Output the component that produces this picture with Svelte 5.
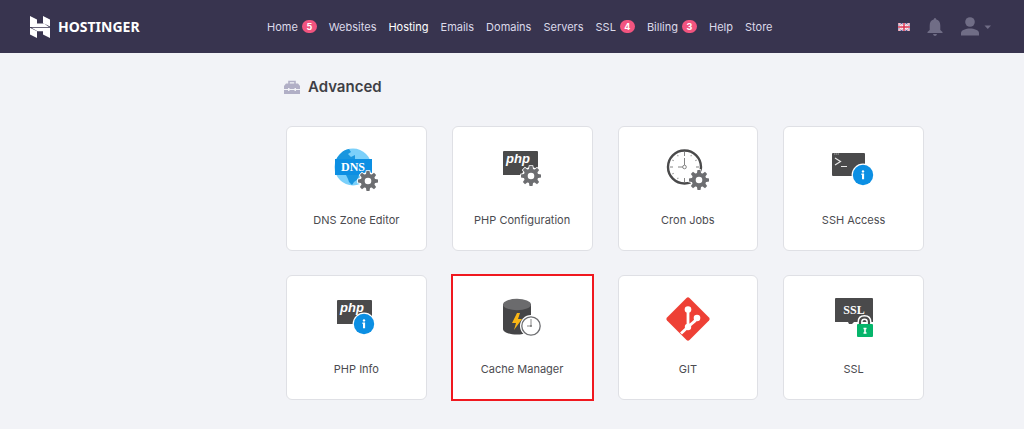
<script lang="ts">
	type NavItem = { label: string; count?: number };

	const nav: NavItem[] = [
		{ label: 'Home', count: 5 },
		{ label: 'Websites' },
		{ label: 'Hosting' },
		{ label: 'Emails' },
		{ label: 'Domains' },
		{ label: 'Servers' },
		{ label: 'SSL', count: 4 },
		{ label: 'Billing', count: 3 },
		{ label: 'Help' },
		{ label: 'Store' }
	];

	const tools = [
		{ id: 'dns', label: 'DNS Zone Editor' },
		{ id: 'php', label: 'PHP Configuration' },
		{ id: 'cron', label: 'Cron Jobs' },
		{ id: 'ssh', label: 'SSH Access' },
		{ id: 'phpinfo', label: 'PHP Info' },
		{ id: 'cache', label: 'Cache Manager' },
		{ id: 'git', label: 'GIT' },
		{ id: 'ssl', label: 'SSL' }
	];

	const activeNav = 'Hosting';
	let selected = $state('cache');

	const teeth = [0, 45, 90, 135, 180, 225, 270, 315];
	const ticks = [30, 60, 120, 150, 210, 240, 300, 330];
</script>

{#snippet gear(x: number, y: number)}
	<g transform="translate({x} {y})">
		<circle r="9" fill="#fff" />
		{#each teeth as angle}
			<path
				d="M-2.2-6 L-1.5-10 H1.5 L2.2-6Z"
				fill="#6d6e71"
				stroke="#fff"
				stroke-width="1.6"
				paint-order="stroke"
				transform="rotate({angle})"
			/>
		{/each}
		<circle r="5.3" fill="#fff" stroke="#6d6e71" stroke-width="4" />
	</g>
{/snippet}

{#snippet info(x: number, y: number)}
	<g transform="translate({x} {y})">
		<circle r="11.4" fill="#fff" />
		<circle r="10.2" fill="#0c8fe3" />
		<circle cy="-3.6" r="1.2" fill="#fff" />
		<path d="M-1.6-1.4H1.1V4.2H-1V0H-1.6Z" fill="#fff" />
	</g>
{/snippet}

{#snippet icon(id: string)}
	<svg class="icon" viewBox="0 0 44 44" aria-hidden="true">
		{#if id === 'dns'}
			<circle cx="19" cy="19" r="18.5" fill="#7bd0fa" />
			<path
				d="M2 12C5 6 9 2 15 1L17 4L14 6L17 9L21 7V11H2ZM12 27H25L24 31L20 34L18 37L15 34L14 31ZM30 27H35L31 33Z"
				fill="#1996df"
			/>
			<rect x="1" y="11" width="37" height="16" fill="#0c8fe3" />
			<text x="19" y="23" class="serif">DNS</text>
			{@render gear(34, 33)}
		{:else if id === 'php' || id === 'phpinfo'}
			<path d="M4 3H37Q38 3 38 4V27H27L25 29L23 27H3V4Q3 3 4 3Z" fill="#4a4a4b" />
			<text x="18" y="15" class="php">php</text>
			{#if id === 'php'}
				{@render gear(31, 28)}
			{:else}
				{@render info(30, 27)}
			{/if}
		{:else if id === 'cron'}
			<circle cx="18.5" cy="19" r="16.5" fill="#fff" stroke="#4a4a4b" stroke-width="2.4" />
			{#each ticks as angle}
				<path d="M18.5 5V6.500" stroke="#999" transform="rotate({angle} 18.5 19)" />
			{/each}
			<path
				d="M18.5 4V8M18.5 30V34M4 19H7M30 19H33M18.5 10V17M12 19H17"
				stroke="#777"
				stroke-width=".9"
			/>
			<circle cx="18.5" cy="19" r="1.8" fill="#fff" stroke="#777" stroke-width=".9" />
			{@render gear(33, 32)}
		{:else if id === 'ssh'}
			<path d="M1 5H32Q33 5 33 6V28H1Q0 28 0 27V6Q0 5 1 5Z" fill="#4a4a4b" />
			<path d="M2 6H7" stroke="#aaa" stroke-dasharray="1.5 .5" />
			<path d="M3 10L8.5 13.500L3 17M9 18.500H15" fill="none" stroke="#e8e8e8" stroke-width="1.2" />
			{@render info(31, 27)}
		{:else if id === 'cache'}
			<path d="M3 7V32C3 35 9 37.500 17 37.500S31 35 31 32V7Z" fill="#454547" />
			<ellipse cx="17" cy="7.5" rx="14" ry="5.7" fill="#6b6b6d" />
			<path d="M17 16L12 26H16L14 33L22 22H18L20 16Z" fill="#f9b616" />
			<circle cx="31" cy="29" r="11" fill="#fff" />
			<circle cx="31" cy="29" r="9.2" fill="#fff" stroke="#6d6e71" stroke-width="1.3" />
			<path d="M31 22V29H27" fill="none" stroke="#888" />
			<circle cx="31" cy="29" r="1" fill="#777" />
		{:else if id === 'git'}
			<path
				d="M20.500 1Q22 -.5 23.500 1L43 20.500Q44.500 22 43 23.500L23.500 43Q22 44.500 20.500 43L1 23.500Q-.5 22 1 20.500Z"
				fill="#ee4035"
			/>
			<path
				d="M22 12V28M31 21C29 25 26 26 23 29L15 36.500"
				fill="none"
				stroke="#fff"
				stroke-width="2.8"
			/>
			<circle cx="22" cy="12.5" r="3.3" fill="#fff" />
			<circle cx="31" cy="21" r="3.3" fill="#fff" />
			<circle cx="22" cy="30" r="3.2" fill="#fff" />
		{:else if id === 'ssl'}
			<path d="M4 1H40Q41 1 41 2V25H22L20 27H17L16 25H3V2Q3 1 4 1Z" fill="#4a4a4b" />
			<path d="M28 30V25Q28 20.500 32.500 20.500T37 25V30" fill="none" stroke="#fff" stroke-width="5" />
			<rect x="24" y="26" width="18" height="14" fill="#fff" />
			<path
				d="M28 30V25Q28 20.500 32.500 20.500T37 25V30"
				fill="none"
				stroke="#4a4a4b"
				stroke-width="2.2"
			/>
			<text x="22" y="17" class="serif">SSL</text>
			<rect x="25" y="27" width="16" height="13" rx="1" fill="#05b56b" />
			<path d="M33 31.500V36M31.500 31.500H34.500M31.500 36H34.500" stroke="#fff" stroke-width="1.6" />
		{/if}
	</svg>
{/snippet}

<header class="topbar">
	<a class="brand" href="#home" aria-label="Hostinger home">
		<svg class="mark" viewBox="0 0 20 22" aria-hidden="true">
			<path
				d="M0 0L7 3.500V7.500H14L19 11H0ZM13 0L20 3.500V10.500L13 7ZM0 11.800L7 15.300V22L0 18.500ZM1.500 11.800H20V22L13 18.500V15.300H7.500Z"
				fill="#fff"
			/>
		</svg>
		<span>HOSTINGER</span>
	</a>

	<nav class="menu">
		{#each nav as item}
			<a href="#{item.label.toLowerCase()}" class:active={item.label === activeNav}>
				{item.label}
				{#if item.count}
					<span class="badge">{item.count}</span>
				{/if}
			</a>
		{/each}
	</nav>

	<div class="account">
		<button aria-label="Language">
			<svg width="12" height="8" viewBox="0 0 12 8">
				<rect width="12" height="8" fill="#5a5794" />
				<path d="M0 0L12 8M12 0L0 8" stroke="#fff" stroke-width="2" />
				<path d="M0 0L12 8M12 0L0 8" stroke="#d9506b" stroke-width=".7" />
				<path d="M6 0V8M0 4H12" stroke="#fff" stroke-width="3" />
				<path d="M6 0V8M0 4H12" stroke="#d9304f" stroke-width="1.5" />
			</svg>
		</button>
		<button aria-label="Notifications">
			<svg width="16" height="18" viewBox="0 0 16 18" fill="#706d86">
				<path
					d="M8 0Q9.300 0 9.300 1.600C12 2.300 13.300 4.500 13.300 7.500V12L15.500 14V15H.5V14L2.700 12V7.500C2.700 4.500 4 2.300 6.700 1.600Q6.700 0 8 0ZM6 16H10Q9.500 18 8 18T6 16Z"
				/>
			</svg>
		</button>
		<button aria-label="Account">
			<svg width="31" height="19" viewBox="0 0 31 19" fill="#706d86">
				<circle cx="10" cy="5" r="4.8" />
				<path d="M1 18.500V16C1 13 6 11.500 10 11.500S19 13 19 16V18.500Z" />
				<path d="M24.500 8.500H31L27.750 12Z" />
			</svg>
		</button>
	</div>
</header>

<main>
	<h2>
		<svg width="16" height="14" viewBox="0 0 16 14" aria-hidden="true">
			<path d="M5 4V1.500H11V4" fill="none" stroke="#b1afc6" stroke-width="1.6" />
			<path
				d="M2 3.500H14L16 6V9H12V8H10.500V9H5.500V8H4V9H0V6ZM0 10H4V11H5.500V10H10.500V11H12V10H16V14H0Z"
				fill="#b1afc6"
			/>
		</svg>
		Advanced
	</h2>

	<div class="grid">
		{#each tools as tool}
			<button
				class="card"
				class:selected={selected === tool.id}
				onclick={() => (selected = tool.id)}
			>
				{@render icon(tool.id)}
				<span>{tool.label}</span>
			</button>
		{/each}
	</div>
</main>

<style>
	:global(body) {
		margin: 0;
		background: #f2f3f7;
		font-family: Inter, 'Open Sans', sans-serif;
	}

	button {
		font: inherit;
		border: 0;
		padding: 0;
		background: none;
		cursor: pointer;
	}

	svg {
		display: block;
		flex: none;
	}

	.topbar {
		display: flex;
		align-items: center;
		height: 53px;
		padding: 0 33px 0 30px;
		background: #38344f;
		box-sizing: border-box;
	}

	.brand {
		display: flex;
		align-items: center;
		gap: 8px;
		width: 237px;
		flex: none;
		color: #fff;
		font: 700 14px/20px 'Noto Sans', sans-serif;
		text-decoration: none;
	}

	.mark {
		width: 20px;
		height: 22px;
	}

	.menu {
		display: flex;
		flex: 1;
		gap: 12px;
	}

	.menu a {
		display: flex;
		align-items: center;
		gap: 4px;
		color: #dcdaea;
		font-size: 11px;
		line-height: 16px;
		text-decoration: none;
	}

	.menu a.active {
		color: #fff;
	}

	.badge {
		width: 15px;
		border-radius: 7px;
		background: #f2547f;
		color: #fff;
		font-size: 9px;
		font-weight: 700;
		line-height: 13px;
		text-align: center;
	}

	.account {
		display: flex;
		align-items: center;
		gap: 17px;
	}

	main {
		padding: 22px 100px 28px 286px;
	}

	h2 {
		display: flex;
		align-items: center;
		gap: 8px;
		margin: 0 0 27px -2px;
		color: #3f3f46;
		font-size: 15px;
		font-weight: 600;
		line-height: 24px;
	}

	.grid {
		display: grid;
		grid-template-columns: repeat(4, 1fr);
		gap: 24px 25px;
	}

	.card {
		display: flex;
		flex-direction: column;
		align-items: center;
		gap: 20px;
		padding: 21px 0 22px;
		border: 1px solid #dfe0e5;
		border-radius: 6px;
		background: #fff;
		color: #4b4b50;
		font-size: 11px;
		line-height: 16px;
	}

	.card.selected {
		border-color: #f0181f;
		border-radius: 0;
		outline: 1px solid #f0181f;
	}

	.icon {
		width: 44px;
		height: 44px;
		overflow: visible;
	}

	.icon text {
		fill: #fff;
		text-anchor: middle;
	}

	.icon .serif {
		font: 700 12px 'Liberation Serif', serif;
	}

	.icon .php {
		font: italic 700 13px 'Liberation Sans', sans-serif;
	}
</style>
